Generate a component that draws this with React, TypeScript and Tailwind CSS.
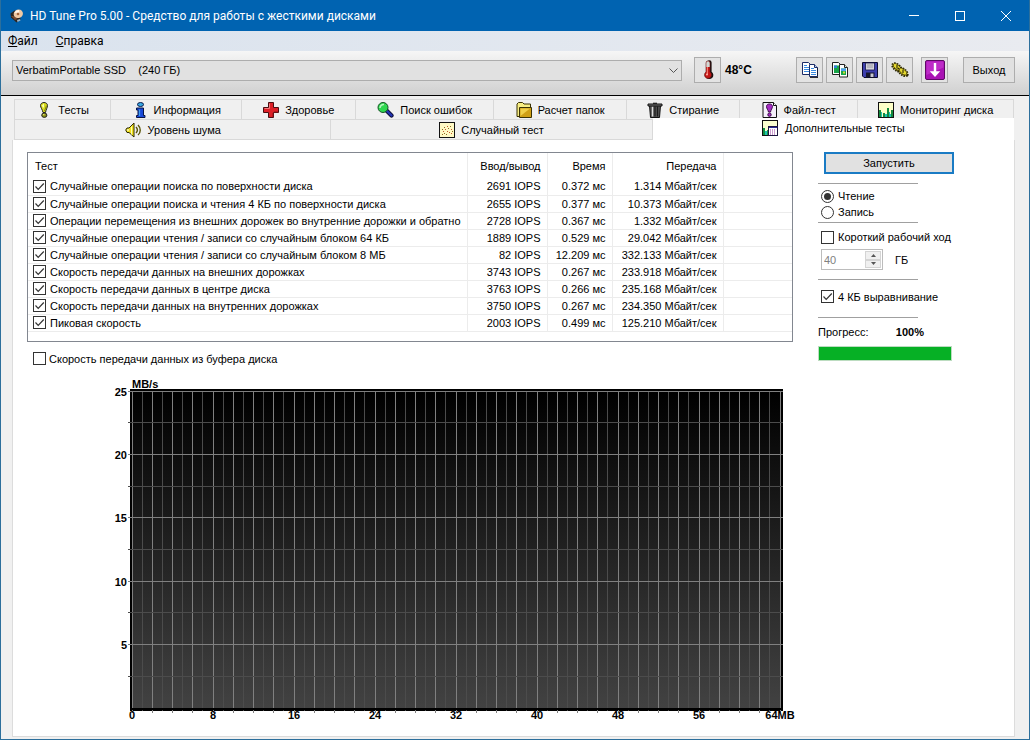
import { useState, type ReactNode } from "react";

/* ---------- icons ---------- */

function AppIcon() {
  return (
    <svg viewBox="0 0 16 16" className="h-4 w-4 shrink-0" aria-hidden="true">
      <path d="M1.500 5.500l4-3 5 2 1 7-4 3-5.500-5z" fill="#2b2622" />
      <path d="M2 8l4 4 3-1-5-3z" fill="#7b4a2e" />
      <ellipse cx="9.300" cy="5.800" rx="4.700" ry="4.200" fill="#f0c9a4" transform="rotate(-20 9.300 5.800)" />
      <path d="M5.500 5A4.500 4.500 0 0 1 10 2l.4 2.500z" fill="#fff5e8" />
      <circle cx="9" cy="6" r="1.300" fill="#a4643a" />
      <path d="M8 12l3-1 .5 1.500L8.500 14z" fill="#9fb4c4" />
    </svg>
  );
}

function Thermometer() {
  return (
    <svg viewBox="0 0 16 20" className="h-5 w-4" aria-hidden="true">
      <path d="M7 2.500a2.300 2.300 0 0 1 4.600 0v9.300a4 4 0 1 1-4.600 0z" fill="#1c1010" />
      <path d="M6 3a2 2 0 0 1 4 0v9a3.500 3.500 0 1 1-4 0z" fill="#c21616" stroke="#5a1010" strokeWidth=".6" />
      <path d="M6.300 3a1.700 1.700 0 0 1 3.400 0v4H6.300z" fill="#cfd8d4" />
      <path d="M7.300 7v7" stroke="#ff8d80" strokeWidth="1" />
      <circle cx="7" cy="14.500" r="1" fill="#ffb0a6" />
    </svg>
  );
}

function CopyText() {
  return (
    <svg viewBox="0 0 16 16" className="h-4 w-4" aria-hidden="true">
      <path d="M.5.5h6l2 2v10h-8z" fill="#fff" stroke="#1b2b66" />
      <path d="M2 3.500h3M2 5.500h5M2 7.500h5M2 9.500h5" stroke="#3a8be0" />
      <path d="M7.500 2.500h5l3 3v9h-8z" fill="#fff" stroke="#1b2b66" />
      <path d="M12.500 2.500v3h3" fill="#b8d0f4" stroke="#1b2b66" />
      <path d="M9 6.500h3M9 8.500h5M9 10.500h5M9 12.500h5" stroke="#3a8be0" />
      <path d="M8 15.500h8V6" stroke="#000" fill="none" strokeWidth=".8" />
    </svg>
  );
}

function CopyImage() {
  return (
    <svg viewBox="0 0 16 16" className="h-4 w-4" aria-hidden="true">
      <path d="M.5.5h6l2 2v10h-8z" fill="#fff" stroke="#222" />
      <path d="M2 3.500h5V11H2z" fill="#17a548" />
      <path d="M2 3.500h3V6H2z" fill="#2f7fd8" />
      <path d="M7.500 2.500h5l3 3v9.500h-8z" fill="#fff" stroke="#222" />
      <path d="M12.500 2.500v3h3" fill="#dfe9d0" stroke="#222" />
      <path d="M9 6.500h5V13H9z" fill="#17a548" />
      <path d="M9 6.500h5V9H9z" fill="#4d9ef0" />
      <path d="M11 9.500h2v2h-2z" fill="#d8d83a" />
    </svg>
  );
}

function Floppy() {
  return (
    <svg viewBox="0 0 16 16" className="h-4 w-4" aria-hidden="true">
      <path d="M.5.5h15v15H2l-1.500-1.500z" fill="#3d3fae" stroke="#0b0b2e" />
      <path d="M3.500 1h9v7h-9z" fill="#d4d4dc" stroke="#15154a" strokeWidth=".8" />
      <path d="M5 3h6M5 5h6" stroke="#8b8b96" strokeWidth=".8" />
      <path d="M4 10.500h8.500v5H4z" fill="#17172c" />
      <path d="M8.500 11.500h3v3.500h-3z" fill="#c9c9d4" />
    </svg>
  );
}

function Gears() {
  return (
    <svg viewBox="0 0 18 16" className="h-4 w-[18px]" aria-hidden="true">
      <ellipse cx="6" cy="5.500" rx="5.500" ry="3" transform="rotate(38 6 5.500)" fill="#c9bb24" stroke="#2b2605" strokeWidth="2" strokeDasharray="1.500 1" />
      <ellipse cx="6" cy="5" rx="4.500" ry="2.300" transform="rotate(38 6 5)" fill="#e6d92f" stroke="#4a430a" strokeWidth=".8" />
      <ellipse cx="12" cy="10" rx="5.500" ry="3" transform="rotate(38 12 10)" fill="#c9bb24" stroke="#2b2605" strokeWidth="2" strokeDasharray="1.500 1" />
      <ellipse cx="12" cy="9.500" rx="4.500" ry="2.300" transform="rotate(38 12 9.500)" fill="#e6d92f" stroke="#4a430a" strokeWidth=".8" />
      <path d="M6 3v3.500M12 7.500V11" stroke="#3b350a" strokeWidth="1.200" />
    </svg>
  );
}

function DownArrow() {
  return (
    <svg viewBox="0 0 20 20" className="h-5 w-5" aria-hidden="true">
      <rect x=".5" y=".5" width="19" height="19" rx="1.500" fill="#a912b4" stroke="#5d0865" />
      <path d="M1.500 1.500h17v6L1.500 15z" fill="#c637cf" opacity=".7" />
      <path d="M8.800 3h2.400v8.200h4L10 17l-5.200-5.800h4z" fill="#fff" />
    </svg>
  );
}

function Exclamation() {
  return (
    <svg viewBox="0 0 16 16" className="h-4 w-4 shrink-0" aria-hidden="true">
      <path d="M4.500 3.500C4.500 1.500 6.300.5 8 .5s3.500 1 3.500 3S10 7.500 9.500 10.500H7C6.500 7.500 4.500 5.500 4.500 3.500z" fill="#d9dc1c" stroke="#222" />
      <path d="M6 3.500L8 1.500v3.500l-1 1z" fill="#fbffb0" />
      <path d="M10.300 3.500c0 2-1.200 3-1.700 5.500" stroke="#7d8010" fill="none" />
      <ellipse cx="8.300" cy="13.200" rx="2.600" ry="2.200" fill="#8e9118" stroke="#222" />
      <path d="M7 12.700h1.500" stroke="#f4f77a" />
    </svg>
  );
}

function Info() {
  return (
    <svg viewBox="0 0 16 16" className="h-4 w-4 shrink-0" aria-hidden="true">
      <ellipse cx="8.500" cy="2.500" rx="3" ry="2" fill="#38a9e4" stroke="#0a1a4a" />
      <path d="M4.500 6h7v7.500h1.500v2H4.500v-2H6V8H4.500z" fill="#1747d8" stroke="#071444" />
      <path d="M7.500 7.500v6.500" stroke="#3d9bf0" strokeWidth="1.300" />
    </svg>
  );
}

function Cross() {
  return (
    <svg viewBox="0 0 16 16" className="h-4 w-4 shrink-0" aria-hidden="true">
      <path d="M5.500.5h5v5h5v5h-5v5h-5v-5h-5v-5h5z" fill="#dc2027" stroke="#4a0c10" />
      <path d="M6.500 6.500v-5M1.500 6.500h5" stroke="#f5797c" />
      <path d="M10 11v4M11 10h4" stroke="#8c1216" />
    </svg>
  );
}

function Magnifier() {
  return (
    <svg viewBox="0 0 17 16" className="h-4 w-[17px] shrink-0" aria-hidden="true">
      <path d="M9.500 8.500l5 5" stroke="#0a0a30" strokeWidth="4.200" strokeLinecap="round" />
      <path d="M9.500 8.500l5 5" stroke="#2233b4" strokeWidth="2.400" strokeLinecap="round" />
      <circle cx="6" cy="5.500" r="5" fill="#2fd850" stroke="#125322" />
      <path d="M3 6a3.500 3.500 0 0 1 4-3.500" stroke="#b9f7bf" strokeWidth="1.500" fill="none" />
    </svg>
  );
}

function Folder() {
  return (
    <svg viewBox="0 0 16 16" className="h-4 w-4 shrink-0" aria-hidden="true">
      <path d="M1 14.500V2l1.500-1.500h4L8 2h6.500v12.500z" fill="#f8ee84" stroke="#3a3205" />
      <path d="M3.500 5.500h12v10h-12z" fill="#cf9f14" stroke="#3a3205" />
      <path d="M4.500 14V6.500H14z" fill="#f0cf48" />
    </svg>
  );
}

function Trash() {
  return (
    <svg viewBox="0 0 16 16" className="h-4 w-4 shrink-0" aria-hidden="true">
      <path d="M2.500 3.500h11l-1 12h-9z" fill="#555" stroke="#111" />
      <path d="M5.500 4.500v10" stroke="#ddd" strokeWidth="1.400" />
      <path d="M8 4.500v10M10.500 4.500v10" stroke="#1c1c1c" strokeWidth="1.200" />
      <path d="M1 2h14v2H1z" fill="#777" stroke="#111" />
      <path d="M6 .7h4V2H6z" fill="#222" />
    </svg>
  );
}

function FileTest() {
  return (
    <svg viewBox="0 0 16 16" className="h-4 w-4 shrink-0" aria-hidden="true">
      <path d="M1 .5h10.500l3 3v12H1z" fill="#f5f0fa" stroke="#111" />
      <path d="M11.500.5v3h3" fill="#fff" stroke="#111" />
      <path d="M4.500 4.500C4.500 2.800 6 2 7.500 2s3 .8 3 2.500S8.800 8 8.500 10H6.500C6.200 8 4.500 6.500 4.500 4.500z" fill="#a62cc4" stroke="#3a0a48" />
      <circle cx="7.500" cy="12.700" r="1.700" fill="#a62cc4" stroke="#3a0a48" />
    </svg>
  );
}

function Monitor() {
  return (
    <svg viewBox="0 0 16 16" className="h-4 w-4 shrink-0" aria-hidden="true">
      <rect x=".5" y=".5" width="15" height="15" fill="#fdffc8" stroke="#111" />
      <path d="M1 15V8h2v7zM5 15v-4h2v4zM9 15V6h2v9zM13 15V8h2v7z" fill="#12883c" />
      <path d="M3 15v-5h1v5zM7 15v-3h2v3zM11 15v-5h1v5zM12 15v-3h1v3z" fill="#1cc3b0" />
    </svg>
  );
}

function Speaker() {
  return (
    <svg viewBox="0 0 17 16" className="h-4 w-[17px] shrink-0" aria-hidden="true">
      <path d="M.7 8L2 6h2L9 1v14l-5-4.500H2z" fill="#f0e11c" stroke="#2c2903" />
      <path d="M6.500 4.500v8" stroke="#fffbb0" />
      <path d="M2 8h2" stroke="#fff" />
      <path d="M11 5c1.600 1.700 1.600 4.300 0 6M13 3c3 3 3 7.500 0 10" fill="none" stroke="#5a5508" strokeWidth="1.400" />
    </svg>
  );
}

const scatter = [
  [3, 12], [4, 9], [5, 11], [6, 7], [7, 12], [8, 9], [9, 6], [10, 10], [11, 4], [12, 7], [12, 11], [5, 5], [8, 4], [13, 9], [3, 7],
];

function Scatter() {
  return (
    <svg viewBox="0 0 16 16" className="h-4 w-4 shrink-0" aria-hidden="true">
      <rect x=".5" y=".5" width="15" height="15" fill="#fff9c4" stroke="#111" />
      {scatter.map(([x, y]) => (
        <rect key={`${x}-${y}`} x={x} y={y} width="1" height="1" fill={x % 2 ? "#8a6a20" : "#c2562c"} />
      ))}
    </svg>
  );
}

function ExtraTests() {
  return (
    <svg viewBox="0 0 16 16" className="h-4 w-4 shrink-0" aria-hidden="true">
      <rect x=".5" y=".5" width="15" height="15" fill="#fbffcf" stroke="#111" />
      <path d="M1 15V8h2v7zM5 15v-5h1v5z" fill="#138f40" />
      <path d="M3 15v-4h2v4z" fill="#1cc3b0" />
      <rect x="6.500" y="6.500" width="9" height="9" fill="#fff" stroke="#1d1640" />
      <path d="M7 7.500h8" stroke="#2b2f93" />
      <path d="M8 10h1m1 0h1m1 0h1M8 12h1m1 0h1m1 0h1M8 14h1m1 0h1m1 0h1" stroke="#9a3da0" />
    </svg>
  );
}

/* ---------- controls ---------- */

function Check({ id, label, checked = false, className = "" }: { id: string; label: string; checked?: boolean; className?: string }) {
  return (
    <div className={`flex items-center ${className}`}>
      <span className="grid shrink-0">
        <input
          id={id}
          type="checkbox"
          defaultChecked={checked}
          className="peer col-start-1 row-start-1 h-[13px] w-[13px] appearance-none border border-[#333] bg-white"
        />
        <svg viewBox="0 0 13 13" className="pointer-events-none invisible col-start-1 row-start-1 h-[13px] w-[13px] peer-checked:visible" aria-hidden="true">
          <path d="M2.500 6.500l2.700 2.800L10.800 3.500" fill="none" stroke="#333" strokeWidth="1.200" />
        </svg>
      </span>
      <label htmlFor={id} className="whitespace-nowrap">{label}</label>
    </div>
  );
}

function Radio({ id, label, checked = false }: { id: string; label: string; checked?: boolean }) {
  return (
    <div className="flex h-4 items-center gap-1">
      <span className="grid shrink-0 place-items-center">
        <input
          id={id}
          type="radio"
          name="mode"
          defaultChecked={checked}
          className="peer col-start-1 row-start-1 h-[13px] w-[13px] appearance-none rounded-full border border-[#333] bg-white"
        />
        <span className="pointer-events-none invisible col-start-1 row-start-1 h-[7px] w-[7px] rounded-full bg-[#333] peer-checked:visible" />
      </span>
      <label htmlFor={id}>{label}</label>
    </div>
  );
}

function ToolButton({ label, children }: { label: string; children: ReactNode }) {
  return (
    <button type="button" aria-label={label} className="flex h-[26px] w-[27px] shrink-0 items-center justify-center border border-[#adadad] bg-[#e3e3e3]">
      {children}
    </button>
  );
}

function Tab({ icon, label, className }: { icon: ReactNode; label: string; className: string }) {
  return (
    <button type="button" role="tab" aria-selected="false" className={`flex min-w-0 items-center justify-center gap-[6px] border-r border-b border-[#d9d9d9] bg-[#f0f0f0] whitespace-nowrap ${className}`}>
      {icon}
      {label}
    </button>
  );
}

/* ---------- data ---------- */

const rows = [
  ["Случайные операции поиска по поверхности диска", "2691 IOPS", "0.372 мс", "1.314 Мбайт/сек"],
  ["Случайные операции поиска и чтения 4 КБ по поверхности диска", "2655 IOPS", "0.377 мс", "10.373 Мбайт/сек"],
  ["Операции перемещения из внешних дорожек во внутренние дорожки и обратно", "2728 IOPS", "0.367 мс", "1.332 Мбайт/сек"],
  ["Случайные операции чтения / записи со случайным блоком 64 КБ", "1889 IOPS", "0.529 мс", "29.042 Мбайт/сек"],
  ["Случайные операции чтения / записи со случайным блоком 8 МБ", "82 IOPS", "12.209 мс", "332.133 Мбайт/сек"],
  ["Скорость передачи данных на внешних дорожках", "3743 IOPS", "0.267 мс", "233.918 Мбайт/сек"],
  ["Скорость передачи данных в центре диска", "3763 IOPS", "0.266 мс", "235.168 Мбайт/сек"],
  ["Скорость передачи данных на внутренних дорожках", "3750 IOPS", "0.267 мс", "234.350 Мбайт/сек"],
  ["Пиковая скорость", "2003 IOPS", "0.499 мс", "125.210 Мбайт/сек"],
];

function ResultsTable() {
  const num = "border-r border-[#ececec] pr-[6px] text-right whitespace-nowrap";
  return (
    <div className="border border-[#828790] bg-white pb-[9px]">
      <table className="w-full table-fixed border-collapse">
        <colgroup>
          <col />
          <col className="w-[80px]" />
          <col className="w-[65px]" />
          <col className="w-[111px]" />
          <col className="w-[69px]" />
        </colgroup>
        <thead>
          <tr className="h-[25px]">
            <th scope="col" className="border-r border-[#ececec] pl-[7px] text-left font-normal">Тест</th>
            <th scope="col" className={`${num} font-normal`}>Ввод/вывод</th>
            <th scope="col" className={`${num} font-normal`}>Время</th>
            <th scope="col" className={`${num} font-normal`}>Передача</th>
            <td />
          </tr>
        </thead>
        <tbody>
          {rows.map(([name, iops, time, speed], i) => (
            <tr key={name} className="h-[17px] border-b border-[#ececec]">
              <td className="border-r border-[#ececec] pl-[5px]">
                <Check id={`test-${i}`} label={name} checked className="gap-1" />
              </td>
              <td className={num}>{iops}</td>
              <td className={num}>{time}</td>
              <td className={num}>{speed}</td>
              <td />
            </tr>
          ))}
        </tbody>
      </table>
    </div>
  );
}

/* ---------- chart ---------- */

const left = 25;
const top = 15;
const plotW = 648;
const plotH = 317;

function Chart() {
  const vertical = Array.from({ length: 65 }, (_, i) => ({ i, x: Math.floor(left + (plotW * i) / 64) + 0.5 }));
  const horizontal = Array.from({ length: 11 }, (_, i) => ({ i, y: Math.floor(top + (plotH * i) / 10) + 0.5 }));
  return (
    <svg viewBox="0 0 686 345" className="block w-full overflow-visible font-bold" fontSize="11" role="img" aria-label="MB/s">
      <defs>
        <linearGradient id="plot" x1="0" y1="0" x2="0" y2="1">
          <stop offset="0" stopColor="#000" />
          <stop offset="1" stopColor="#424242" />
        </linearGradient>
      </defs>
      <rect x={left - 2} y={top - 2} width={plotW + 5} height={plotH + 5} fill="#000" />
      <rect x={left} y={top} width={plotW + 1} height={plotH} fill="url(#plot)" />
      {vertical.map(({ i, x }) => (
        <path key={i} d={`M${x} ${top}V${top + plotH + (i % 2 ? 3 : 5)}`} stroke={i % 2 ? "#4c4c4c" : "#808080"} />
      ))}
      {horizontal.slice(0, 10).map(({ i, y }) => (
        <path key={i} d={`M${left - 4} ${y}H${left + plotW + 3}`} stroke={i % 2 ? "#4c4c4c" : "#808080"} />
      ))}
      <rect x={left - 2} y={top + plotH} width={plotW + 5} height="2" fill="#000" />
      <text x={left} y="12">MB/s</text>
      {[25, 20, 15, 10, 5].map((v, i) => (
        <text key={v} x="20" y={horizontal[i * 2].y + 4} textAnchor="end">{v}</text>
      ))}
      {["0", "8", "16", "24", "32", "40", "48", "56"].map((v, i) => (
        <text key={v} x={left + i * 81} y="343" textAnchor="middle">{v}</text>
      ))}
      <text x={left + 648} y="343" textAnchor="middle">64MB</text>
    </svg>
  );
}

/* ---------- page ---------- */

function SidePanel() {
  const [size, setSize] = useState(40);
  return (
    <aside className="w-[182px] shrink-0">
      <button type="button" className="ml-[6px] block h-[22px] w-[130px] border-2 border-[#1a7bc4] bg-[#e1e1e1] text-center">
        Запустить
      </button>
      <fieldset className="mt-[9px] w-[100px] border-y border-[#a0a0a0] pt-1 pb-[2px] pl-[3px]">
        <Radio id="read" label="Чтение" checked />
        <Radio id="write" label="Запись" />
      </fieldset>
      <Check id="short" label="Короткий рабочий ход" className="mt-[6px] h-4 gap-1 pl-[3px]" />
      <div className="mt-1 flex h-[21px] items-center pl-[3px]">
        <div className="flex h-full w-[62px] border border-[#bcbcbc] p-px text-[#808080]">
          <input
            id="size"
            type="text"
            inputMode="numeric"
            value={size}
            onChange={(e) => setSize(Number(e.target.value) || 0)}
            className="w-full min-w-0 flex-1 bg-white pl-px"
          />
          <div className="flex w-[16px] shrink-0 flex-col">
            <button type="button" aria-label="+" onClick={() => setSize(size + 1)} className="grid flex-1 place-items-center border border-[#d4d4d4] bg-[#f0f0f0]">
              <svg viewBox="0 0 5 3" className="h-[3px] w-[5px]"><path d="M0 3h5L2.500 0z" fill="#555" /></svg>
            </button>
            <button type="button" aria-label="−" onClick={() => setSize(size - 1)} className="grid flex-1 place-items-center border border-[#d4d4d4] bg-[#f0f0f0]">
              <svg viewBox="0 0 5 3" className="h-[3px] w-[5px]"><path d="M0 0h5L2.500 3z" fill="#555" /></svg>
            </button>
          </div>
        </div>
        <label htmlFor="size" className="pl-3">ГБ</label>
      </div>
      <div className="mt-[9px] w-[100px] border-y border-[#a0a0a0] pt-2 pb-3 pl-[3px]">
        <Check id="align" label="4 КБ выравнивание" checked className="h-[17px] gap-1" />
      </div>
      <div className="mt-[6px] flex h-4 w-[134px] items-center justify-between pr-[28px]">
        <label htmlFor="progress">Прогресс:</label>
        <b>100%</b>
      </div>
      <progress
        id="progress"
        value={100}
        max={100}
        className="mt-[6px] block h-[15px] w-[134px] appearance-none border border-[#bcdcc0] [&::-webkit-progress-bar]:bg-[#e6e6e6] [&::-webkit-progress-value]:bg-[#06b025]"
      />
    </aside>
  );
}

export default function App() {
  return (
    <div className="flex min-h-screen flex-col border-x border-b border-[#2c6f9c] bg-[#f0f0f0] font-['Liberation_Sans',sans-serif] text-[11px] leading-4 text-black">
      <header className="flex h-[31px] items-center bg-[#0063b1] pl-2 font-[Roboto,sans-serif] text-xs text-white">
        <AppIcon />
        <h1 className="flex-1 pl-[5px] whitespace-nowrap">HD Tune Pro 5.00 - Средство для работы с жесткими дисками</h1>
        <button type="button" aria-label="Свернуть" className="grid h-full w-[46px] place-items-center">
          <svg viewBox="0 0 10 10" className="h-[10px] w-[10px]"><path d="M0 4.500h10" stroke="#fff" /></svg>
        </button>
        <button type="button" aria-label="Развернуть" className="grid h-full w-[46px] place-items-center">
          <svg viewBox="0 0 10 10" className="h-[10px] w-[10px]"><rect x=".5" y=".5" width="9" height="9" fill="none" stroke="#fff" /></svg>
        </button>
        <button type="button" aria-label="Закрыть" className="grid h-full w-[46px] place-items-center">
          <svg viewBox="0 0 10 10" className="h-[10px] w-[10px]"><path d="M0 0l10 10M10 0L0 10" stroke="#fff" /></svg>
        </button>
      </header>

      <nav className="flex h-5 items-center gap-[18px] bg-linear-to-r from-[#dae3ee] to-[#e9ebf0] pl-[7px] font-[Roboto,sans-serif] text-xs">
        <button type="button"><u>Ф</u>айл</button>
        <button type="button"><u>С</u>правка</button>
      </nav>

      <div className="flex h-11 items-center bg-linear-to-b from-[#f6f6f6] to-[#d0d0d0] pr-[14px] pb-[6px] pl-[11px]">
        <div className="grid min-w-0 flex-1 items-center">
          <select aria-label="Диск" className="col-start-1 row-start-1 h-[21px] w-full appearance-none border border-[#adadad] bg-[#e1e1e1] pl-[3px]">
            <option>VerbatimPortable SSD{"\u00a0\u00a0\u00a0\u00a0"}(240 ГБ)</option>
          </select>
          <svg viewBox="0 0 9 5" className="pointer-events-none col-start-1 row-start-1 mr-1 h-[5px] w-[9px] justify-self-end" aria-hidden="true">
            <path d="M.5.5l4 4 4-4" fill="none" stroke="#555" />
          </svg>
        </div>
        <div className="flex items-center pl-3">
          <ToolButton label="Температура"><Thermometer /></ToolButton>
          <b className="w-[75px] pl-1 text-xs">48°C</b>
        </div>
        <div className="flex gap-[3px]">
          <ToolButton label="Копировать текст"><CopyText /></ToolButton>
          <ToolButton label="Копировать изображение"><CopyImage /></ToolButton>
          <ToolButton label="Сохранить"><Floppy /></ToolButton>
          <ToolButton label="Настройки"><Gears /></ToolButton>
        </div>
        <div className="flex gap-[15px] pl-2">
          <ToolButton label="Свернуть в трей"><DownArrow /></ToolButton>
          <button type="button" className="h-[26px] w-[52px] border border-[#adadad] bg-[#e1e1e1]">Выход</button>
        </div>
      </div>

      <main className="flex flex-1 flex-col border-t border-black pt-[3px] pr-[14px] pb-[2px] pl-[11px]">
        <div role="tablist" className="mr-px ml-[2px] border-t border-l border-[#d9d9d9]">
          <div className="flex h-5">
            <Tab className="flex-[96]" icon={<Exclamation />} label="Тесты" />
            <Tab className="flex-[131]" icon={<Info />} label="Информация" />
            <Tab className="flex-[114]" icon={<Cross />} label="Здоровье" />
            <Tab className="flex-[138]" icon={<Magnifier />} label="Поиск ошибок" />
            <Tab className="flex-[133]" icon={<Folder />} label="Расчет папок" />
            <Tab className="flex-[113]" icon={<Trash />} label="Стирание" />
            <Tab className="flex-[118]" icon={<FileTest />} label="Файл-тест" />
            <Tab className="flex-[156]" icon={<Monitor />} label="Мониторинг диска" />
          </div>
          <div className="flex h-5">
            <Tab className="flex-[316]" icon={<Speaker />} label="Уровень шума" />
            <Tab className="flex-[321]" icon={<Scatter />} label="Случайный тест" />
            <button type="button" role="tab" aria-selected="true" className="-mt-[2px] flex min-w-0 flex-[362] items-center justify-center gap-[7px] bg-white pb-[2px] whitespace-nowrap">
              <ExtraTests />
              Дополнительные тесты
            </button>
          </div>
        </div>
        <section role="tabpanel" className="flex flex-1 gap-[25px] border-x border-b border-[#dcdcdc] bg-white pt-3 pr-[14px] pb-3 pl-[14px]">
          <div className="min-w-0 flex-1">
            <ResultsTable />
            <Check id="buffer" label="Скорость передачи данных из буфера диска" className="mt-[9px] h-4 gap-[3px] pl-[6px]" />
            <div className="mt-[9px] pl-20">
              <Chart />
            </div>
          </div>
          <SidePanel />
        </section>
      </main>
    </div>
  );
}
